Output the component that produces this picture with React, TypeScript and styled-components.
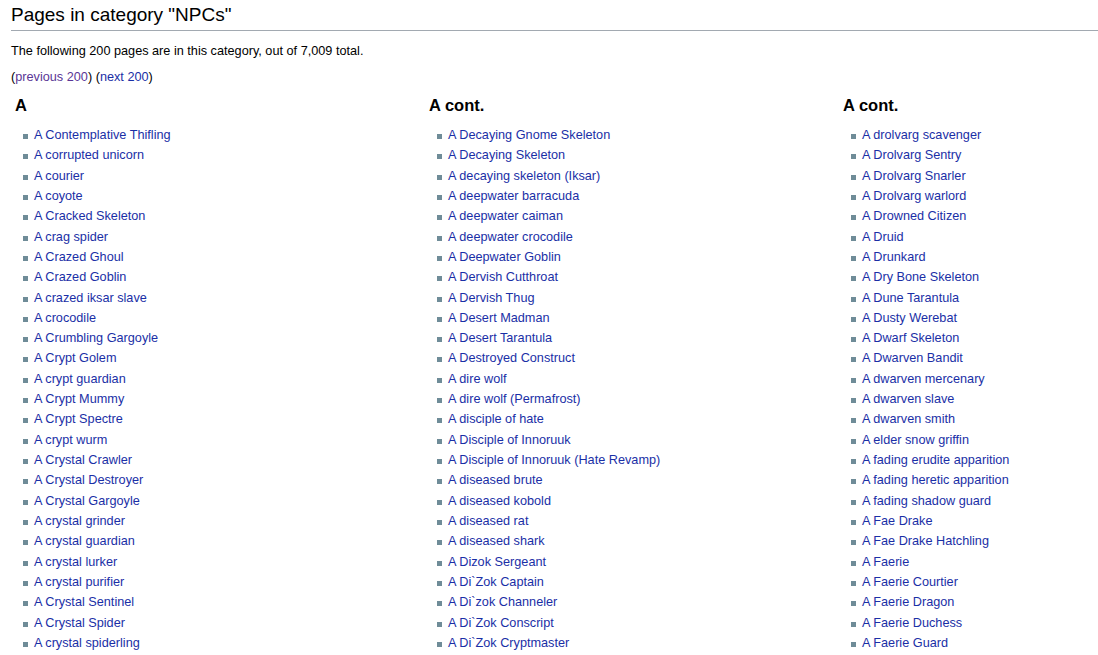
import React from "react";
import styled, { createGlobalStyle } from "styled-components";

const GlobalStyle = createGlobalStyle`
  html, body {
    margin: 0;
    padding: 0;
    background: #ffffff;
    overflow: hidden;
  }
  body {
    font-family: "Liberation Sans", Arial, sans-serif;
    color: #000000;
  }
`;

const Page = styled.div`
  width: 1098px;
  height: 655px;
  overflow: hidden;
  padding: 0 0 0 11px;
  box-sizing: border-box;
`;

const Title = styled.h2`
  margin: 0;
  padding: 4px 0 5px 0;
  font-size: 19px;
  font-weight: normal;
  line-height: 21px;
  border-bottom: 1px solid #a2a9b1;
  color: #000;
`;

const Intro = styled.p`
  margin: 11px 0 0 0;
  font-size: 12.7px;
  line-height: 19px;
`;

const Nav = styled.p`
  margin: 7px 0 0 0;
  font-size: 12.7px;
  line-height: 19px;
`;

const Link = styled.a<{ $visited?: boolean }>`
  color: ${(p) => (p.$visited ? "#5a3696" : "#1a2fa6")};
  text-decoration: none;
`;

const Columns = styled.div`
  display: grid;
  grid-template-columns: repeat(3, 414px);
  margin: 8px 0 0 3px;
`;

const Column = styled.div`
  display: flex;
  flex-direction: column;
`;

const Heading = styled.h3`
  margin: 0 0 0 1px;
  font-size: 16.5px;
  font-weight: bold;
  line-height: 20px;
`;

const List = styled.ul`
  list-style: none;
  margin: 11px 0 0 0;
  padding: 0 0 0 9px;
`;

const Item = styled.li`
  display: flex;
  align-items: center;
  gap: 6px;
  font-size: 12.7px;
  line-height: 19px;
  margin-bottom: 1.32px;
  white-space: nowrap;
`;

const Bullet = styled.span`
  width: 5px;
  height: 5px;
  background: #6f8c98;
  flex: none;
  margin-top: 2px;
`;

const columns: { title: string; items: string[] }[] = [
  {
    title: "A",
    items: [
      "A Contemplative Thifling",
      "A corrupted unicorn",
      "A courier",
      "A coyote",
      "A Cracked Skeleton",
      "A crag spider",
      "A Crazed Ghoul",
      "A Crazed Goblin",
      "A crazed iksar slave",
      "A crocodile",
      "A Crumbling Gargoyle",
      "A Crypt Golem",
      "A crypt guardian",
      "A Crypt Mummy",
      "A Crypt Spectre",
      "A crypt wurm",
      "A Crystal Crawler",
      "A Crystal Destroyer",
      "A Crystal Gargoyle",
      "A crystal grinder",
      "A crystal guardian",
      "A crystal lurker",
      "A crystal purifier",
      "A Crystal Sentinel",
      "A Crystal Spider",
      "A crystal spiderling",
    ],
  },
  {
    title: "A cont.",
    items: [
      "A Decaying Gnome Skeleton",
      "A Decaying Skeleton",
      "A decaying skeleton (Iksar)",
      "A deepwater barracuda",
      "A deepwater caiman",
      "A deepwater crocodile",
      "A Deepwater Goblin",
      "A Dervish Cutthroat",
      "A Dervish Thug",
      "A Desert Madman",
      "A Desert Tarantula",
      "A Destroyed Construct",
      "A dire wolf",
      "A dire wolf (Permafrost)",
      "A disciple of hate",
      "A Disciple of Innoruuk",
      "A Disciple of Innoruuk (Hate Revamp)",
      "A diseased brute",
      "A diseased kobold",
      "A diseased rat",
      "A diseased shark",
      "A Dizok Sergeant",
      "A Di`Zok Captain",
      "A Di`zok Channeler",
      "A Di`Zok Conscript",
      "A Di`Zok Cryptmaster",
    ],
  },
  {
    title: "A cont.",
    items: [
      "A drolvarg scavenger",
      "A Drolvarg Sentry",
      "A Drolvarg Snarler",
      "A Drolvarg warlord",
      "A Drowned Citizen",
      "A Druid",
      "A Drunkard",
      "A Dry Bone Skeleton",
      "A Dune Tarantula",
      "A Dusty Werebat",
      "A Dwarf Skeleton",
      "A Dwarven Bandit",
      "A dwarven mercenary",
      "A dwarven slave",
      "A dwarven smith",
      "A elder snow griffin",
      "A fading erudite apparition",
      "A fading heretic apparition",
      "A fading shadow guard",
      "A Fae Drake",
      "A Fae Drake Hatchling",
      "A Faerie",
      "A Faerie Courtier",
      "A Faerie Dragon",
      "A Faerie Duchess",
      "A Faerie Guard",
    ],
  },
];

export default function App() {
  return (
    <>
      <GlobalStyle />
      <Page>
        <Title>Pages in category "NPCs"</Title>
        <Intro>The following 200 pages are in this category, out of 7,009 total.</Intro>
        <Nav>
          (<Link href="#" $visited>previous 200</Link>) (<Link href="#">next 200</Link>)
        </Nav>
        <Columns>
          {columns.map((col, i) => (
            <Column key={i}>
              <Heading>{col.title}</Heading>
              <List>
                {col.items.map((name) => (
                  <Item key={name}>
                    <Bullet />
                    <Link href="#">{name}</Link>
                  </Item>
                ))}
              </List>
            </Column>
          ))}
        </Columns>
      </Page>
    </>
  );
}
